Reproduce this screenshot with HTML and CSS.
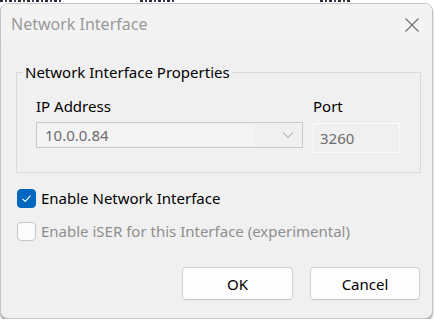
FILE: index.html
```html
<!DOCTYPE html>
<html>
<head>
  <meta charset="UTF-8">
  <title>Network Interface</title>
  <link rel="stylesheet" href="styles.css">
</head>
<body>
  <!-- окно позади диалога, видна только нижняя кромка строки -->
  <div class="behind">
    <span class="frag f1"></span>
    <span class="frag f2"></span>
    <span class="frag f3"></span>
  </div>

  <div class="dialog">
    <div class="titlebar">
      <span class="title">Network Interface</span>
      <svg class="close" width="16" height="16" viewBox="0 0 16 16">
        <path d="M1.5 1.5 L14.5 14.5 M14.5 1.5 L1.5 14.5" stroke="#6f6f6f" stroke-width="1.1" fill="none"/>
      </svg>
    </div>

    <div class="content">
      <fieldset class="group">
        <legend>Network Interface Properties</legend>
        <div class="fields">
          <div class="field ip">
            <label>IP Address</label>
            <div class="combo">
              <span class="combo-value">10.0.0.84</span>
              <svg class="chevron" width="12" height="8" viewBox="0 0 12 8">
                <path d="M1 1.5 L6 6.5 L11 1.5" stroke="#9a9a9a" stroke-width="1" fill="none"/>
              </svg>
            </div>
          </div>
          <div class="field port">
            <label>Port</label>
            <div class="textbox">3260</div>
          </div>
        </div>
      </fieldset>

      <div class="check first">
        <span class="box checked">
          <svg width="11" height="9" viewBox="0 0 11 9">
            <path d="M1.5 4.8 L4.2 7.4 L9.5 1.6" stroke="#fff" stroke-width="1.1" fill="none"/>
          </svg>
        </span>
        <span class="check-label">Enable Network Interface</span>
      </div>
      <div class="check disabled">
        <span class="box"></span>
        <span class="check-label">Enable iSER for this Interface (experimental)</span>
      </div>

      <div class="buttons">
        <button class="btn ok">OK</button>
        <button class="btn cancel">Cancel</button>
      </div>
    </div>
  </div>
</body>
</html>
```

FILE: styles.css
```css
body {
  margin: 0;
  background: #fff;
  font-family: "Noto Sans", "Open Sans", sans-serif;
  font-size: 15px;
  overflow: hidden;
}

/* Полоска окна позади */
.behind {
  height: 3px;
  display: flex;
  align-items: flex-start;
}

.frag {
  display: block;
  height: 2px;
  background: repeating-linear-gradient(to right, #2a2a2a 0 3px, transparent 3px 5px, #3a3a5a 5px 7px, transparent 7px 9px);
}

.f1 { width: 62px; }
.f2 { width: 34px; margin-left: 78px; }
.f3 { width: 30px; margin-left: 146px; }

/* Диалог */
.dialog {
  width: 431px;
  height: 314px;
  border: 1px solid #c4c4c4;
  border-radius: 8px;
  background: #f0f0f0;
  box-shadow: 0 2px 2px rgba(0, 0, 0, 0.35);
  overflow: hidden;
  display: flex;
  flex-direction: column;
}

.titlebar {
  height: 41px;
  display: flex;
  align-items: center;
  justify-content: space-between;
  padding: 0 12px 0 10px;
  background: linear-gradient(to bottom, #f3f3f3 70%, #f0f0f0);
}

.title {
  font-size: 16px;
  color: #999;
  margin-top: -2px;
}

.content {
  flex: 1;
  display: flex;
  flex-direction: column;
  padding: 0 12px 0 15px;
}

/* Групповая рамка */
.group {
  margin: 17px 0 0 0;
  padding: 0 20px 19px 19px;
  border: 1px solid #dadada;
}

.group legend {
  padding: 0 2px;
  margin-left: -13px;
  color: #000;
  line-height: 20px;
}

.fields {
  display: flex;
  gap: 10px;
  margin-top: 14px;
}

.field label {
  display: block;
  color: #000;
  line-height: 20px;
  height: 26px;
}

.field.ip {
  width: 267px;
}

.combo {
  height: 24px;
  border: 1px solid #cacaca;
  background: #f0f0f0;
  display: flex;
  align-items: center;
  padding: 0 0 0 1px;
}

.combo-value {
  flex: 1;
  height: 22px;
  line-height: 22px;
  padding-left: 7px;
  background: #f4f4f4;
  color: #6d6d6d;
  margin-right: 28px;
}

.chevron {
  margin-right: 8px;
}

.field.port {
  width: 87px;
}

.textbox {
  height: 28px;
  line-height: 28px;
  margin-top: 1px;
  border: 1px solid #fbfbfb;
  padding-left: 6px;
  color: #6d6d6d;
  background: #f0f0f0;
}

/* Флажки */
.check {
  display: flex;
  align-items: center;
  gap: 5px;
  margin-left: 1px;
  height: 20px;
}

.check.first {
  margin-top: 15px;
}

.check.disabled {
  margin-top: 13px;
}

.box {
  width: 19px;
  height: 19px;
  box-sizing: border-box;
  border-radius: 4px;
  border: 1px solid #c6c6c6;
  background: #fbfbfb;
  display: flex;
  align-items: center;
  justify-content: center;
}

.box.checked {
  background: #0067c0;
  border-color: #0067c0;
}

.check-label {
  color: #000;
}

.check.disabled .check-label {
  color: #8f8f8f;
}

/* Кнопки */
.buttons {
  display: flex;
  justify-content: flex-end;
  gap: 17px;
  margin-top: 26px;
}

.btn {
  width: 111px;
  height: 33px;
  background: #fdfdfd;
  border: 1px solid #d2d2d2;
  border-bottom-color: #c4c4c4;
  border-radius: 4px;
  font-family: "Noto Sans", "Open Sans", sans-serif;
  font-size: 15px;
  color: #000;
}

.btn.cancel {
  width: 110px;
}
```
